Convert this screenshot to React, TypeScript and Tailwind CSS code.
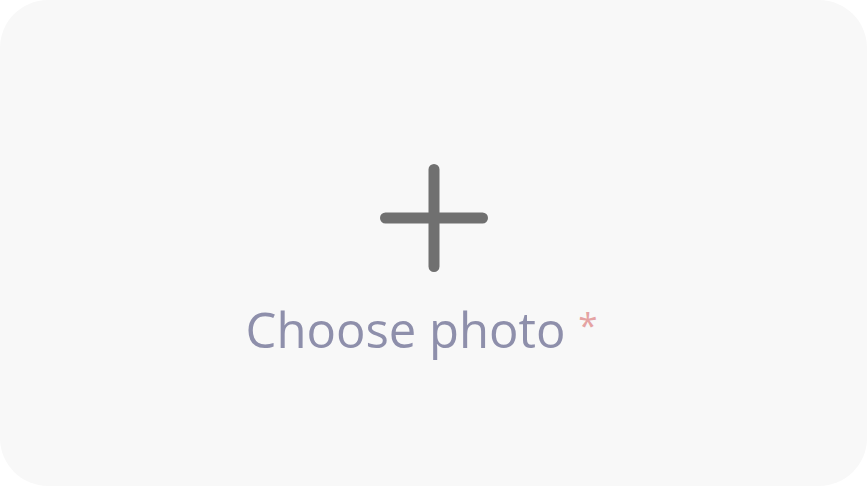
export default function App() {
  return (
    <div className="h-[486px] w-[867px] bg-white">
      <button
        type="button"
        className="flex h-full w-full flex-col items-center rounded-[48px] bg-[#f8f8f8] pt-[164px]"
      >
        <svg width="108" height="108" viewBox="0 0 108 108" aria-hidden="true">
          <path
            d="M54 5.5V102.5M5.5 54H102.5"
            stroke="#707070"
            strokeWidth="11"
            strokeLinecap="round"
            fill="none"
          />
        </svg>
        <span className="mt-[23px] whitespace-pre pr-[24px] font-['Open_Sans',sans-serif] text-[49px] leading-[60px] text-[#8e8fab]">
          {'Choose photo '}
          <span className="align-[10px] text-[35px] text-[#e5a3a3]">*</span>
        </span>
      </button>
    </div>
  );
}
